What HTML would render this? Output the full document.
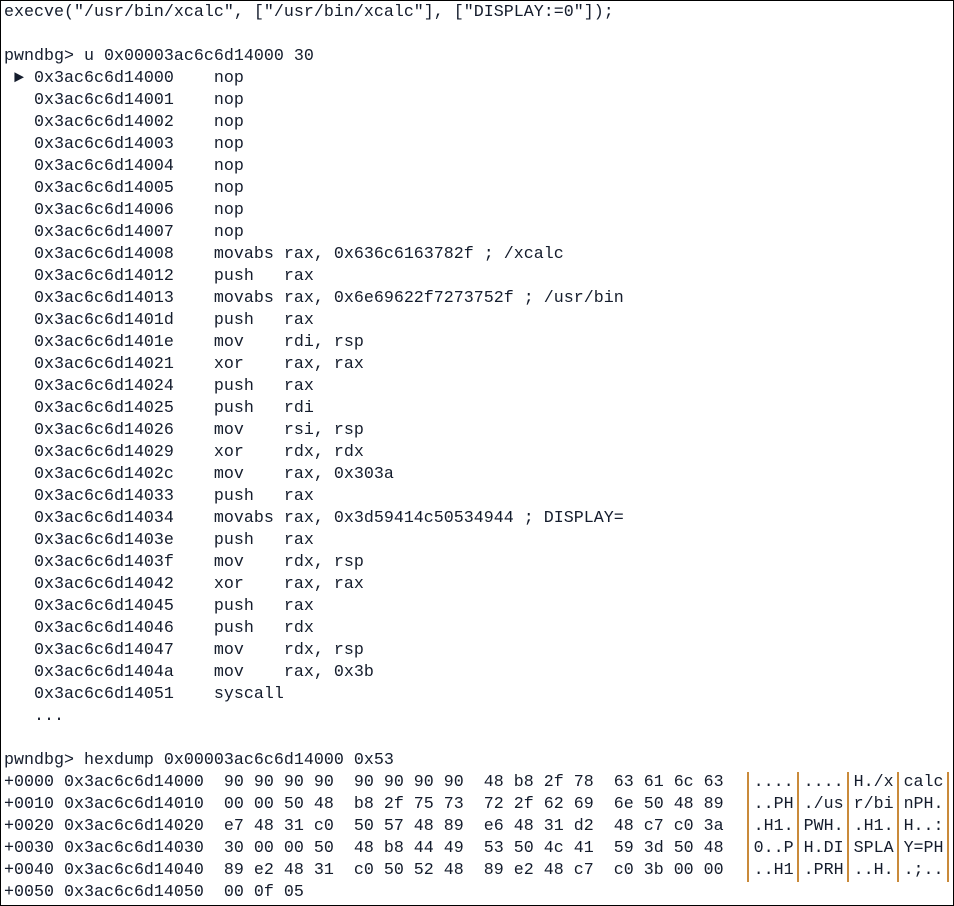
<!DOCTYPE html>
<html><head><meta charset="utf-8"><style>
html,body{margin:0;padding:0;background:#fff;}
.f{position:absolute;left:0;top:0;width:952px;height:904px;border:1px solid #000;background:#fff;overflow:hidden;}
pre{margin:0;position:absolute;left:3px;top:1px;font-family:"Liberation Mono","DejaVu Sans Mono",monospace;font-size:16.67px;line-height:22px;color:#141c2c;}
.b{display:inline-block;width:1ch;height:22px;vertical-align:top;background:linear-gradient(90deg,transparent 3px,#c98a3a 3px,#c98a3a 5px,transparent 5px);}
</style></head><body><div class="f"><pre>execve("/usr/bin/xcalc", ["/usr/bin/xcalc"], ["DISPLAY:=0"]);

pwndbg&gt; u 0x00003ac6c6d14000 30
 ► 0x3ac6c6d14000    nop
   0x3ac6c6d14001    nop
   0x3ac6c6d14002    nop
   0x3ac6c6d14003    nop
   0x3ac6c6d14004    nop
   0x3ac6c6d14005    nop
   0x3ac6c6d14006    nop
   0x3ac6c6d14007    nop
   0x3ac6c6d14008    movabs rax, 0x636c6163782f ; /xcalc
   0x3ac6c6d14012    push   rax
   0x3ac6c6d14013    movabs rax, 0x6e69622f7273752f ; /usr/bin
   0x3ac6c6d1401d    push   rax
   0x3ac6c6d1401e    mov    rdi, rsp
   0x3ac6c6d14021    xor    rax, rax
   0x3ac6c6d14024    push   rax
   0x3ac6c6d14025    push   rdi
   0x3ac6c6d14026    mov    rsi, rsp
   0x3ac6c6d14029    xor    rdx, rdx
   0x3ac6c6d1402c    mov    rax, 0x303a
   0x3ac6c6d14033    push   rax
   0x3ac6c6d14034    movabs rax, 0x3d59414c50534944 ; DISPLAY=
   0x3ac6c6d1403e    push   rax
   0x3ac6c6d1403f    mov    rdx, rsp
   0x3ac6c6d14042    xor    rax, rax
   0x3ac6c6d14045    push   rax
   0x3ac6c6d14046    push   rdx
   0x3ac6c6d14047    mov    rdx, rsp
   0x3ac6c6d1404a    mov    rax, 0x3b
   0x3ac6c6d14051    syscall
   ...

pwndbg&gt; hexdump 0x00003ac6c6d14000 0x53
+0000 0x3ac6c6d14000  90 90 90 90  90 90 90 90  48 b8 2f 78  63 61 6c 63  <span class="b"></span>....<span class="b"></span>....<span class="b"></span>H./x<span class="b"></span>calc<span class="b"></span>
+0010 0x3ac6c6d14010  00 00 50 48  b8 2f 75 73  72 2f 62 69  6e 50 48 89  <span class="b"></span>..PH<span class="b"></span>./us<span class="b"></span>r/bi<span class="b"></span>nPH.<span class="b"></span>
+0020 0x3ac6c6d14020  e7 48 31 c0  50 57 48 89  e6 48 31 d2  48 c7 c0 3a  <span class="b"></span>.H1.<span class="b"></span>PWH.<span class="b"></span>.H1.<span class="b"></span>H..:<span class="b"></span>
+0030 0x3ac6c6d14030  30 00 00 50  48 b8 44 49  53 50 4c 41  59 3d 50 48  <span class="b"></span>0..P<span class="b"></span>H.DI<span class="b"></span>SPLA<span class="b"></span>Y=PH<span class="b"></span>
+0040 0x3ac6c6d14040  89 e2 48 31  c0 50 52 48  89 e2 48 c7  c0 3b 00 00  <span class="b"></span>..H1<span class="b"></span>.PRH<span class="b"></span>..H.<span class="b"></span>.;..<span class="b"></span>
+0050 0x3ac6c6d14050  00 0f 05</pre></div></body></html>
